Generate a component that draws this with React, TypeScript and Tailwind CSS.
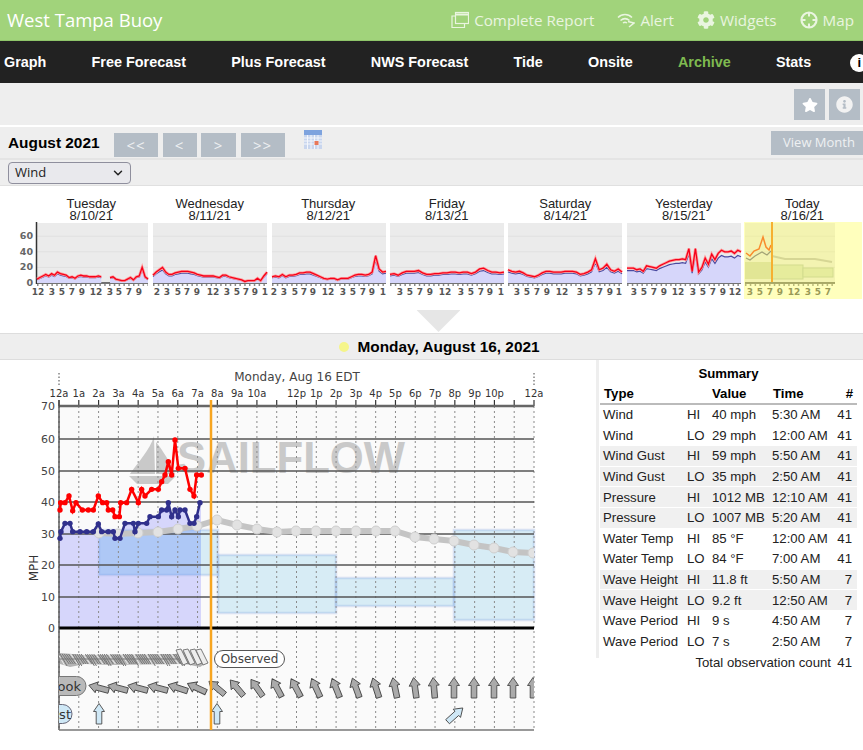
import { ChevronDown } from 'lucide-react';
import { FaCog, FaInfoCircle, FaStar } from 'react-icons/fa';

type Pt = [number, number];
type Tick = [number, string];

const NAV = ['Graph', 'Free Forecast', 'Plus Forecast', 'NWS Forecast', 'Tide', 'Onsite', 'Archive', 'Stats'];

const DAYS = [
  { name: 'Tuesday', date: '8/10/21' },
  { name: 'Wednesday', date: '8/11/21' },
  { name: 'Thursday', date: '8/12/21' },
  { name: 'Friday', date: '8/13/21' },
  { name: 'Saturday', date: '8/14/21' },
  { name: 'Yesterday', date: '8/15/21' },
  { name: 'Today', date: '8/16/21' },
];

// gust samples per day, -1 is a gap in the data
const SPARK: { x: number; w: number; gust: number[]; ticks: Tick[] }[] = [
  {
    x: 37, w: 111,
    gust: [5, 7, 9, 11, 9, 12, 10, 14, 12, 11, 10, 7, 8, 6, 9, 10, 9, 9, 8, 8, 8, 9, 8, -1, -1, 7, 8, 5, 4, 3, 3, 5, 7, 4, 8, 9, 20, 8, 5],
    ticks: [[1, '12'], [15, '3'], [25, '5'], [35, '7'], [45, '9'], [59, '12'], [73, '3'], [82, '5'], [92, '7'], [102, '9']],
  },
  {
    x: 153, w: 114,
    gust: [10, 14, 17, 20, 14, 11, 11, 13, 14, 15, 15, 15, 14, 13, 11, 10, 9, 9, 9, 9, 8, 7, 10, 10, 8, 7, 6, 5, 4, 2, 3, 3, 3, 6, 3, 9, 14],
    ticks: [[4, '2'], [14, '3'], [25, '5'], [34, '7'], [44, '9'], [60, '12'], [74, '3'], [84, '5'], [93, '7'], [102, '9'], [112, '1']],
  },
  {
    x: 272, w: 114,
    gust: [8, 9, 8, 11, 8, 10, 10, 11, 13, 13, 14, 14, 12, 10, 8, 6, 5, 6, 6, 4, 6, 6, 6, 8, 10, 11, 11, 10, 11, 14, 35, 18, 14, 15],
    ticks: [[2, '2'], [12, '3'], [23, '5'], [32, '7'], [41, '9'], [56, '12'], [71, '3'], [81, '5'], [91, '7'], [100, '9'], [111, '1']],
  },
  {
    x: 390, w: 114,
    gust: [11, 12, 10, 13, 15, 15, 15, 16, 13, 11, 11, 12, 12, 13, 13, 14, 14, 13, 14, 14, 12, 14, 18, 19, 16, 14, 14, 13, 14],
    ticks: [[10, '3'], [20, '5'], [30, '7'], [40, '9'], [55, '12'], [71, '3'], [81, '5'], [91, '7'], [100, '9'], [111, '1']],
  },
  {
    x: 508, w: 114,
    gust: [17, 15, 14, 15, 13, 10, 9, 8, 10, 13, 15, 15, 14, 14, 14, 15, 15, 15, 14, 11, 12, 14, 17, 31, 17, 19, 24, 17, 15, 18, 14],
    ticks: [[9, '3'], [19, '5'], [29, '7'], [39, '9'], [54, '12'], [72, '3'], [82, '5'], [92, '7'], [102, '9'], [111, '1']],
  },
  {
    x: 627, w: 114,
    gust: [19, 19, 19, 17, 18, 15, 22, 21, 20, 19, 22, 24, 26, 28, 29, 30, 30, 31, 30, 44, 15, 44, 14, 20, 32, 24, 37, 30, 38, 42, 40, 40, 41, 38, 42, 40],
    ticks: [[7, '3'], [17, '5'], [27, '7'], [37, '9'], [51, '12'], [66, '3'], [76, '5'], [86, '7'], [96, '9'], [108, '12']],
  },
];

const HOURS = ['12a', '1a', '2a', '3a', '4a', '5a', '6a', '7a', '8a', '9a', '10a', '', '12p', '1p', '2p', '3p', '4p', '5p', '6p', '7p', '8p', '9p', '10p', '', '12a'];

const hourX = (i: number) => 59 + (i * 475) / 24;
const GRID = [439, 471, 502, 534, 565, 597];

// read off the reference at 3x, so [x * 3, (y - 360) * 3]
const GUST: Pt[] = [[180, 450], [182, 428], [195, 428], [207, 408], [218, 452], [228, 428], [247, 450], [265, 450], [280, 450], [295, 408], [308, 428], [320, 428], [325, 450], [338, 450], [345, 470], [358, 470], [362, 428], [380, 428], [395, 388], [415, 428], [425, 388], [435, 408], [455, 388], [475, 388], [485, 365], [495, 345], [505, 305], [515, 345], [525, 240], [535, 325], [555, 325], [570, 388], [582, 408], [590, 345], [604, 345]];
const WIND: Pt[] = [[180, 535], [183, 515], [195, 490], [210, 490], [218, 515], [240, 515], [260, 515], [280, 515], [295, 492], [305, 515], [325, 515], [340, 515], [345, 535], [360, 535], [375, 490], [400, 490], [405, 515], [415, 490], [440, 490], [450, 470], [475, 470], [485, 450], [500, 450], [505, 428], [515, 470], [525, 450], [535, 470], [540, 450], [555, 450], [570, 490], [582, 490], [590, 470], [600, 428]];
const scale = (pts: Pt[]): Pt[] => pts.map(([x, y]) => [x / 3, y / 3 + 360]);
const toPoints = (pts: Pt[]) => pts.map(([x, y]) => `${x},${y}`).join(' ');

const FORECAST: Pt[] = [[99, 533], [118, 534], [138, 533], [158, 532], [178, 529], [197, 526], [217, 520], [237, 525], [257, 529], [277, 532], [296, 531], [316, 531], [336, 531], [356, 531], [376, 531], [395, 531], [415, 537], [434, 539], [454, 541], [474, 545], [494, 548], [513, 552], [533, 553]];

const BLOCKS = [
  { x: 99, y: 530, w: 119, h: 45 },
  { x: 218, y: 555, w: 118, h: 58 },
  { x: 336, y: 578, w: 118, h: 28 },
  { x: 454, y: 530, w: 80, h: 90 },
];

const ARROWS: [number, number][] = [[99, -75], [118, -75], [138, -75], [158, -75], [178, -72], [197, -65], [217, -50], [237, -40], [257, -35], [277, -28], [296, -28], [316, -25], [336, -22], [356, -20], [376, -18], [395, -12], [415, -8], [434, -5], [454, 0], [474, 0], [494, 0], [513, 0], [533, 0]];

const SUMMARY = [
  ['Wind', 'HI', '40 mph', '5:30 AM', '41'],
  ['Wind', 'LO', '29 mph', '12:00 AM', '41'],
  ['Wind Gust', 'HI', '59 mph', '5:50 AM', '41'],
  ['Wind Gust', 'LO', '35 mph', '2:50 AM', '41'],
  ['Pressure', 'HI', '1012 MB', '12:10 AM', '41'],
  ['Pressure', 'LO', '1007 MB', '5:20 AM', '41'],
  ['Water Temp', 'HI', '85 °F', '12:00 AM', '41'],
  ['Water Temp', 'LO', '84 °F', '7:00 AM', '41'],
  ['Wave Height', 'HI', '11.8 ft', '5:50 AM', '7'],
  ['Wave Height', 'LO', '9.2 ft', '12:50 AM', '7'],
  ['Wave Period', 'HI', '9 s', '4:50 AM', '7'],
  ['Wave Period', 'LO', '7 s', '2:50 AM', '7'],
];

function ReportIcon() {
  return (
    <svg viewBox="0 0 18 18" className="h-[18px] w-[18px]" fill="none" stroke="currentColor" strokeWidth="1.2">
      <rect x="4.5" y="1.5" width="13" height="11" />
      <path d="M4.5 3.5h13" strokeWidth="2" />
      <path d="M4.5 5H1v11.5h12.5v-4" />
    </svg>
  );
}

function AlertIcon() {
  return (
    <svg viewBox="0 0 18 18" className="h-[18px] w-[18px]" fill="none" stroke="currentColor" strokeWidth="1.5">
      <path d="M1 6.500c4-4 10-4 14 0" />
      <path d="M3.500 9.500c3-2.500 6-2.500 9 0" />
      <path d="M6 12c1.500-1 2.500-1 4 0" />
      <path d="M11 10.500l6 1.500-5 4" strokeWidth="1.500" />
    </svg>
  );
}

function MapIcon() {
  return (
    <svg viewBox="0 0 18 18" className="h-[18px] w-[18px]" fill="none" stroke="currentColor">
      <circle cx="9" cy="9" r="7.500" strokeWidth="2.200" />
      <path d="M9 2v3.500M9 12.500V16M2 9h3.500M12.500 9H16" strokeWidth="2" />
    </svg>
  );
}

function CalendarIcon() {
  return (
    <svg viewBox="0 0 18 19" className="mt-[3px] h-[19px] w-[18px]">
      <rect width="18" height="19" fill="#c9d6ee" />
      <rect width="18" height="5" fill="#7ea3de" />
      <path d="M0 8h18M0 11h18M0 14h18M3.500 5v14M7 5v14M10.500 5v14M14 5v14" stroke="#f4f6fb" strokeWidth="1" />
      <rect x="10.500" y="11" width="4" height="4" fill="#e8785a" />
    </svg>
  );
}

function NavBar() {
  return (
    <nav className="flex h-[42px] items-center gap-[45.2px] overflow-hidden bg-[#222222] pt-[2px] pl-[4px] font-['Liberation_Sans',sans-serif] text-[14.4px] font-bold whitespace-nowrap text-white">
      {NAV.map((item) => (
        <span key={item} className={item === 'Archive' ? 'text-[#7fba50]' : ''}>
          {item}
        </span>
      ))}
      <span className="-ml-[6px] flex h-[18px] w-[18px] shrink-0 items-center justify-center rounded-full bg-white text-[13px] text-black">i</span>
    </nav>
  );
}

function SparkStrip() {
  const y = (v: number) => 61 - v * 0.78;
  return (
    <svg viewBox="0 0 863 78" className="block h-[78px] w-[863px]">
      {[...SPARK, { x: 745, w: 90, gust: [] as number[], ticks: [] as Tick[] }].map((day) => (
        <g key={day.x}>
          <rect x={day.x} y="1" width={day.w} height="60" fill="#ebebeb" />
          {[20, 40, 60].map((v) => (
            <line key={v} x1={day.x} x2={day.x + day.w} y1={y(v)} y2={y(v)} stroke="#e0e0e0" />
          ))}
          <line x1={day.x} x2={day.x + day.w} y1="61" y2="61" stroke="#444" strokeWidth="1.500" />
          <line x1={day.x} x2={day.x + day.w} y1="63" y2="63" stroke="#666" strokeWidth="1.500" strokeDasharray="1.500 3.300" />
        </g>
      ))}
      <line x1="36.500" x2="36.500" y1="0" y2="62" stroke="#333" strokeWidth="1.500" />
      {[[60, '60'], [40, '40'], [20, '20'], [0, '0']].map(([v, t]) => (
        <text key={t} x="33" y={y(Number(v)) + 3} textAnchor="end" fontSize="9.500" fontWeight="700" fill="#666" fontFamily="DejaVu Sans">
          {t}
        </text>
      ))}
      {SPARK.map((day) => {
        const step = day.w / (day.gust.length - 1);
        const parts: Pt[][] = [[]];
        day.gust.forEach((v, i) => {
          if (v < 0) parts.push([]);
          else parts[parts.length - 1].push([day.x + i * step, v]);
        });
        return (
          <g key={day.x}>
            {parts.filter((p) => p.length).map((p, i) => {
              const wind: Pt[] = p.map(([x, v]) => [x, y(v * 0.84)]);
              const gust: Pt[] = p.map(([x, v]) => [x, y(v)]);
              const area: Pt[] = [[p[0][0], 61], ...wind, [p[p.length - 1][0], 61]];
              return (
                <g key={i} fill="none">
                  <polygon points={toPoints(area)} fill="#d6d6fa" />
                  <polyline points={toPoints(wind)} stroke="#4a4aa0" strokeWidth="1.200" />
                  <polyline points={toPoints(gust)} stroke="#ff9a9a" strokeWidth="2.800" />
                  <polyline points={toPoints(gust)} stroke="#f5001a" strokeWidth="1.300" />
                </g>
              );
            })}
          </g>
        );
      })}
      {SPARK.map((day) => (
        <g key={day.x} fontSize="9" fontWeight="700" fill="#555" fontFamily="DejaVu Sans" textAnchor="middle">
          {day.ticks.map(([dx, t]) => (
            <text key={dx} x={day.x + dx} y="73">
              {t}
            </text>
          ))}
        </g>
      ))}
      {/* today, forecast part is faded under the yellow overlay */}
      <g fill="none">
        <rect x="745" y="40" width="27" height="17" fill="#cfd5bc" />
        <rect x="772" y="43" width="31" height="14" fill="#d6e0c8" stroke="#b5c5b0" />
        <rect x="803" y="46" width="30" height="9" fill="#d6e0c8" stroke="#b5c5b0" />
        <polyline points="772,34 785,37 815,37 832,40" stroke="#bbb" strokeWidth="2" />
        <polyline points="746,36 750,38 755,34 762,30 767,33 771,29" stroke="#666688" strokeWidth="1.200" />
        <polyline points="746,31 750,34 754,29 759,27 763,15 766,25 769,28 771,23" stroke="#f54010" strokeWidth="1.500" />
      </g>
      <g fontSize="9" fontWeight="700" fill="#555" fontFamily="DejaVu Sans" textAnchor="middle">
        {[[750, '3'], [760, '5'], [770, '7'], [780, '9'], [794, '12'], [808, '3'], [818, '5'], [828, '7']].map(([x, t]) => (
          <text key={x} x={x} y="73">
            {t}
          </text>
        ))}
      </g>
      <rect x="744" y="0" width="118" height="77" fill="#ffff5a" opacity="0.4" />
      <line x1="772" x2="772" y1="0" y2="60" stroke="#f6b030" strokeWidth="2" />
    </svg>
  );
}

function Arrow({ x, y, rotate, fill }: { x: number; y: number; rotate: number; fill: string }) {
  return (
    <path
      transform={`translate(${x} ${y}) rotate(${rotate})`}
      d="M0 -10.500L5.500 -2.500L2.800 -2.500L2.800 10L-2.800 10L-2.800 -2.500L-5.500 -2.500Z"
      fill={fill}
      stroke="#4a4a4a"
      strokeWidth="0.900"
      strokeLinejoin="round"
    />
  );
}

function WindChart() {
  const gust = scale(GUST);
  const wind = scale(WIND);
  const area: Pt[] = [[59, 628], [59, 534], ...wind, [201, 502], [201, 628]];
  const barbs = Array.from({ length: 60 }, (_, i) => 58 + i * 2.100);
  return (
    <svg viewBox="0 360 596 390" className="block h-[390px] w-[596px] shrink-0" fontFamily="DejaVu Sans">
      <defs>
        <clipPath id="plot">
          <rect x="59" y="400" width="475" height="330" />
        </clipPath>
      </defs>
      <rect x="59" y="406" width="475" height="324" fill="#fafafa" />

      <text x="297" y="381" textAnchor="middle" fontSize="12" fill="#444">
        Monday, Aug 16 EDT
      </text>

      {/* logo */}
      <g fill="#c9c9c9">
        <path d="M154 436L155 474L130 474C138 462 150 450 154 436Z" />
        <path d="M156 442C164 452 171 464 175 474L156 474Z" />
        <path d="M129 476L176 476L168 484L137 484Z" />
      </g>
      <text x="177" y="473" fontSize="44" fontWeight="700" fill="#c9c9c9" fontFamily="Liberation Sans" textLength="228" lengthAdjust="spacingAndGlyphs">
        SAILFLOW
      </text>

      <polygon points={toPoints(area)} fill="#d6d6fb" />
      {BLOCKS.map((b) => (
        <rect key={b.x} x={b.x} y={b.y} width={b.w} height={b.h} fill="#87ceeb" fillOpacity="0.3" stroke="#8aa8e0" strokeOpacity="0.3" strokeWidth="2.500" />
      ))}
      <rect x="99" y="530" width="102" height="45" fill="#7fa8f8" fillOpacity="0.25" />

      {HOURS.map((label, i) => (
        <g key={i}>
          <line x1={hourX(i)} x2={hourX(i)} y1="406" y2="730" stroke="#8a8a8a" strokeDasharray="2 3" />
          <line x1={hourX(i)} x2={hourX(i)} y1="400" y2="406" stroke="#333" strokeWidth="1.200" />
          <text x={hourX(i)} y="397" textAnchor="middle" fontSize="10" fontWeight="500" fill="#333">
            {label}
          </text>
        </g>
      ))}
      <line x1="59" x2="59" y1="373" y2="386" stroke="#444" strokeDasharray="1.500 2" />
      <line x1="534" x2="534" y1="373" y2="386" stroke="#444" strokeDasharray="1.500 2" />

      {GRID.map((y) => (
        <line key={y} x1="59" x2="534" y1={y} y2={y} stroke="#555" strokeWidth="1.300" />
      ))}
      <line x1="59" x2="534" y1="406" y2="406" stroke="#666" strokeWidth="2.500" />
      <line x1="59" x2="534" y1="628" y2="628" stroke="#000" strokeWidth="3" />
      <line x1="59" x2="59" y1="400" y2="730" stroke="#444" strokeWidth="1.300" />
      <line x1="59" x2="534" y1="730" y2="730" stroke="#777" strokeWidth="1.300" />

      {[[70, 406], [60, 439], [50, 471], [40, 502], [30, 534], [20, 565], [10, 597], [0, 628]].map(([v, y]) => (
        <text key={v} x="55" y={y + 4} textAnchor="end" fontSize="11" fill="#444">
          {v}
        </text>
      ))}
      <text transform="translate(38 568) rotate(-90)" textAnchor="middle" fontSize="12" fill="#333">
        MPH
      </text>

      <polyline points={toPoints(FORECAST)} fill="none" stroke="#c4c4c4" strokeWidth="6" clipPath="url(#plot)" />
      <g clipPath="url(#plot)">
        {FORECAST.map(([x, y]) => (
          <circle key={x} cx={x} cy={y} r="5" fill="#e2e2e2" stroke="#cfcfcf" />
        ))}
      </g>

      <polyline points={toPoints(wind)} fill="none" stroke="#30308c" strokeWidth="2.500" />
      {wind.map(([x, y], i) => (
        <circle key={i} cx={x} cy={y} r="2.700" fill="#30308c" />
      ))}
      <polyline points={toPoints(gust)} fill="none" stroke="#f00" strokeWidth="2.500" />
      {gust.map(([x, y], i) => (
        <circle key={i} cx={x} cy={y} r="2.700" fill="#f00" />
      ))}

      {/* observed wind barbs */}
      <g clipPath="url(#plot)">
        <path d="M60 653L85 655L175 654L188 650L205 664L200 667L185 664L110 665L85 664L70 667L60 664Z" fill="#b4b4b4" />
        {barbs.map((x, i) => (
          <line key={x} x1={x} y1="654" x2={x + 7} y2={i % 7 < 2 ? 666 : 664} stroke={i % 6 === 0 ? '#efefef' : '#6e6e6e'} strokeWidth="0.900" />
        ))}
        <line x1="60" x2="182" y1="659" y2="659" stroke="#777" strokeWidth="1.200" />
        {[176, 183, 190, 196].map((x) => (
          <path key={x} d={`M${x} 650L${x + 5} 649L${x + 12} 663L${x + 7} 665Z`} fill="#ededed" stroke="#6e6e6e" strokeWidth="0.900" />
        ))}
      </g>
      <rect x="214.500" y="650.500" width="70" height="17" rx="8.500" fill="#fff" stroke="#555" />
      <text x="249.500" y="663" textAnchor="middle" fontSize="12" fill="#444">
        Observed
      </text>

      <g clipPath="url(#plot)">
        <rect x="20" y="676.500" width="66" height="19" rx="9.500" fill="#b9b9b9" stroke="#777" />
        <text x="81" y="691" textAnchor="end" fontSize="13" fill="#333">
          Outlook
        </text>
        <rect x="10" y="704.500" width="62" height="19" rx="9.500" fill="#cfe8f6" stroke="#667" />
        <text x="71" y="719" textAnchor="end" fontSize="13" fill="#333">
          Forecast
        </text>
        {ARROWS.map(([x, r]) => (
          <Arrow key={x} x={x} y={688} rotate={r} fill="#aaaaaa" />
        ))}
        <Arrow x={99} y={714} rotate={0} fill="#cfe8f6" />
        <Arrow x={217} y={714} rotate={0} fill="#cfe8f6" />
        <Arrow x={455} y={715} rotate={48} fill="#cfe8f6" />
      </g>

      <line x1="211" x2="211" y1="400" y2="730" stroke="#f7a520" strokeWidth="2.500" />
    </svg>
  );
}

function SummaryTable() {
  return (
    <div className="h-[298px] w-[267px] border-l-[3px] border-[#eeeeee] pt-[1px] pl-[1px] font-['Liberation_Sans',sans-serif] text-[13.2px] leading-[19px] text-[#222222]">
      <table className="w-[257px] table-fixed border-separate border-spacing-0">
        <colgroup>
          <col className="w-[84px]" />
          <col className="w-[25px]" />
          <col className="w-[60px]" />
          <col className="w-[66px]" />
          <col className="w-[22px]" />
        </colgroup>
        <thead className="font-bold text-black">
          <tr className="h-[22px]">
            <th colSpan={5} className="pt-[3px] text-center">Summary</th>
          </tr>
          <tr className="h-[22px]">
            <th className="border-b-2 border-[#bbbbbb] pl-[4px] text-left">Type</th>
            <th className="border-b-2 border-[#bbbbbb]" />
            <th className="border-b-2 border-[#bbbbbb] pl-[3px] text-left">Value</th>
            <th className="border-b-2 border-[#bbbbbb] pl-[4px] text-left">Time</th>
            <th className="border-b-2 border-[#bbbbbb] pr-[4px] text-right">#</th>
          </tr>
        </thead>
        <tbody>
          {SUMMARY.map((row, i) => {
            const shade = (i >= 2 && i <= 5) || i === 8 || i === 9;
            return (
              <tr key={i} className={shade ? 'h-[20.6px] bg-[#f0f0f0]' : 'h-[20.6px]'}>
                <td className="border-b border-white pl-[3px] whitespace-nowrap">{row[0]}</td>
                <td className="border-b border-white pl-[3px]">{row[1]}</td>
                <td className="border-b border-white pl-[3px] whitespace-nowrap">{row[2]}</td>
                <td className="border-b border-white pl-[3px] whitespace-nowrap">{row[3]}</td>
                <td className="border-b border-white pr-[5px] text-right">{row[4]}</td>
              </tr>
            );
          })}
          <tr className="h-[20.6px]">
            <td colSpan={4} className="pr-[4px] text-right">Total observation count</td>
            <td className="pr-[5px] text-right">41</td>
          </tr>
        </tbody>
      </table>
    </div>
  );
}

export default function App() {
  return (
    <div className="h-[750px] w-[863px] overflow-hidden bg-white">
      <header className="flex h-[41px] items-center justify-between border-b border-[#8fc56a] bg-[#a1d37b] pr-[9px] pl-[7px] font-['Open_Sans',sans-serif] text-[15.2px] text-[#eaf5e0]">
        <span className="text-[18.500px] text-white">West Tampa Buoy</span>
        <div className="flex items-center gap-[23px]">
          <span className="flex items-center gap-[5px]"><ReportIcon />Complete Report</span>
          <span className="flex items-center gap-[5px]"><AlertIcon />Alert</span>
          <span className="flex items-center gap-[5px]"><FaCog className="h-[18px] w-[18px]" />Widgets</span>
          <span className="flex items-center gap-[5px]"><MapIcon />Map</span>
        </div>
      </header>
      <NavBar />

      <div className="flex h-[44px] justify-end gap-[4px] border-b-2 border-white bg-[#eeeeee] pt-[6px] pr-[3px]">
        <button className="flex h-[31px] w-[31px] items-center justify-center bg-[#b4bdc6] text-white"><FaStar className="h-[16px] w-[16px]" /></button>
        <button className="flex h-[31px] w-[31px] items-center justify-center bg-[#b4bdc6] text-[#f2f2f2]"><FaInfoCircle className="h-[17px] w-[17px]" /></button>
      </div>

      <div className="flex h-[33px] items-start border-b-2 border-[#e4e4e4] bg-[#eeeeee] pl-[8px] font-['Open_Sans',sans-serif]">
        <span className="mt-[4px] w-[106px] font-['Liberation_Sans',sans-serif] text-[15.400px] font-bold text-black">August 2021</span>
        <div className="mt-[6px] flex gap-[4.500px] text-[15px] tracking-[1px] text-[#eef0f2]">
          <button className="h-[24px] w-[44px] bg-[#b4bdc6]">&lt;&lt;</button>
          <button className="h-[24px] w-[34px] bg-[#b4bdc6]">&lt;</button>
          <button className="h-[24px] w-[35px] bg-[#b4bdc6]">&gt;</button>
          <button className="h-[24px] w-[44px] bg-[#b4bdc6]">&gt;&gt;</button>
        </div>
        <div className="ml-[19px]"><CalendarIcon /></div>
        <button className="mt-[4px] ml-auto h-[24px] w-[92px] bg-[#b4bdc6] pl-[4px] text-[13px] text-[#eef0f2]">View Month</button>
      </div>

      <div className="flex h-[26px] items-center border-b border-[#e0e0e0] bg-[#eeeeee] pl-[8px]">
        <div className="flex h-[22px] w-[123px] items-center justify-between rounded-[4px] border border-[#8f8f9d] bg-[#e9e9ed] pr-[5px] pl-[6px] font-['Open_Sans',sans-serif] text-[13px] text-[#222222]">
          Wind
          <ChevronDown className="h-[14px] w-[14px]" strokeWidth={2.500} />
        </div>
      </div>

      <section className="h-[147px]">
        <div className="flex pt-[12px] pl-[32px] font-['Liberation_Sans',sans-serif] text-[13px] leading-[12px] text-[#222222]">
          {DAYS.map((d) => (
            <div key={d.date} className="w-[118.500px] text-center">
              <div>{d.name}</div>
              <div>{d.date}</div>
            </div>
          ))}
        </div>
        <SparkStrip />
        <svg viewBox="0 0 44 22" className="mx-auto mt-[10px] block h-[22px] w-[44px] translate-x-[6.500px]">
          <path d="M0 0H44L22 22Z" fill="#e6e6e6" />
        </svg>
      </section>

      <div className="flex h-[27px] items-center justify-center gap-[8px] border-y border-[#dddddd] bg-[#eeeeee] pl-[16px] font-['Liberation_Sans',sans-serif] text-[15.400px] font-bold text-black">
        <span className="h-[10px] w-[10px] rounded-full bg-[#f5f58a]" />
        Monday, August 16, 2021
      </div>

      <div className="flex">
        <WindChart />
        <SummaryTable />
      </div>
    </div>
  );
}
